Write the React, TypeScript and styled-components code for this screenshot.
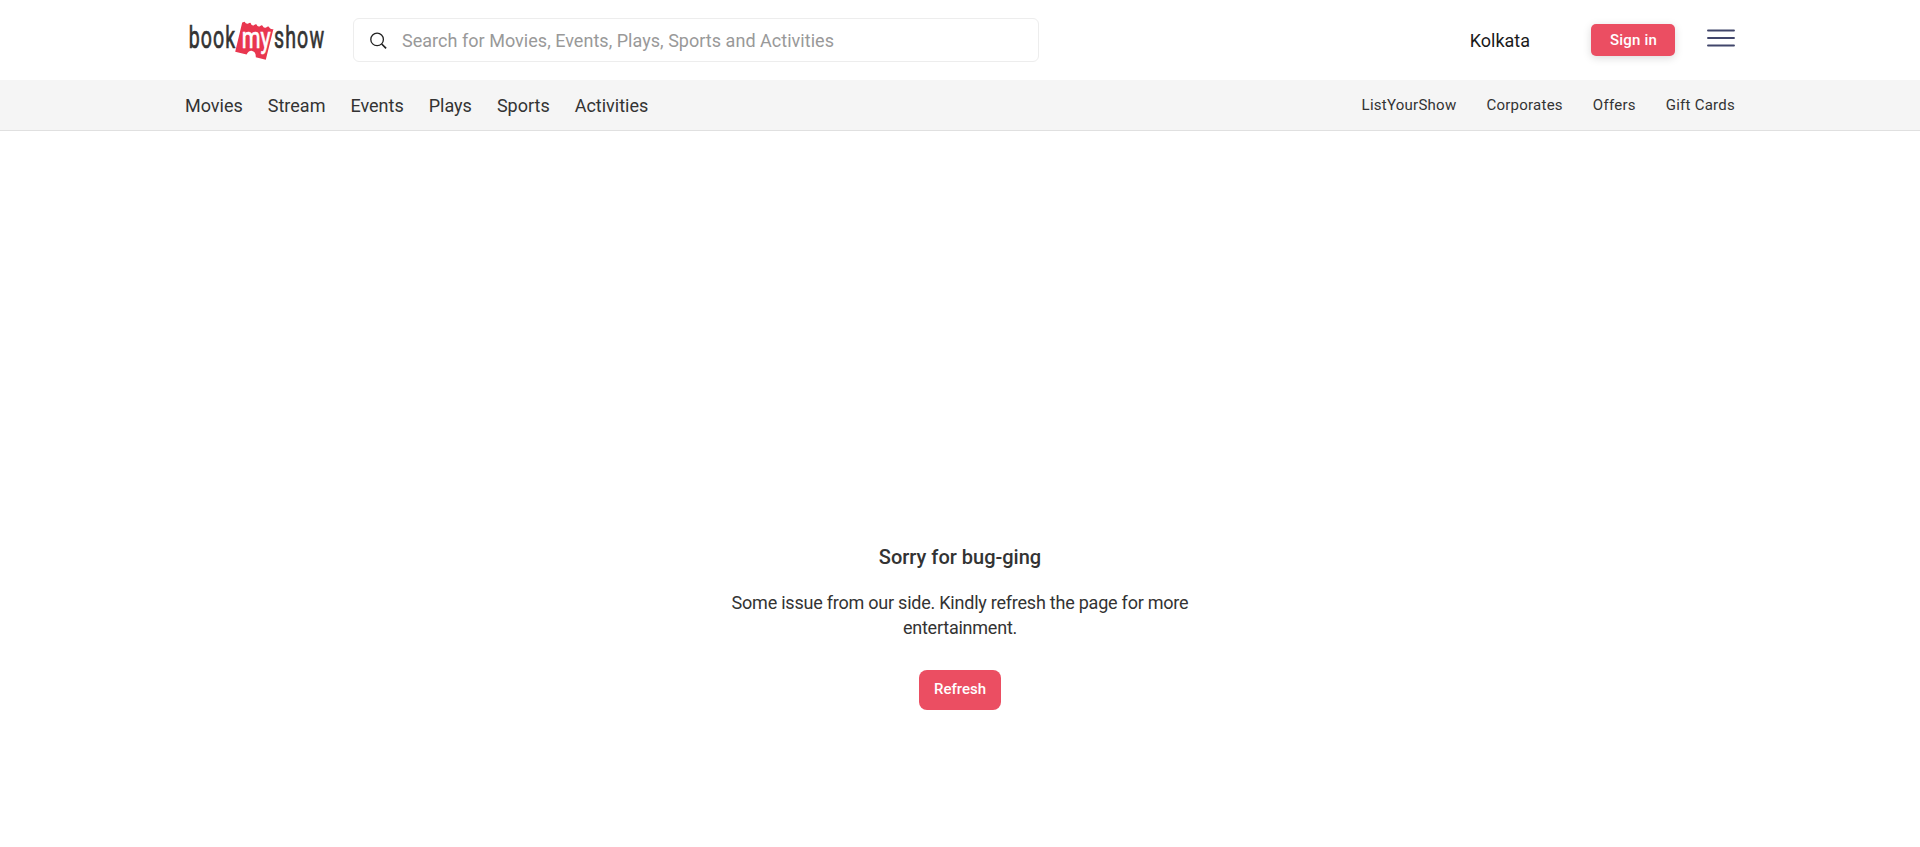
import React from "react";
import styled, { createGlobalStyle } from "styled-components";

const GlobalStyle = createGlobalStyle`
  * { box-sizing: border-box; }
  body { margin: 0; background: #fff; color: #333; font-family: Roboto, sans-serif; }
  button, input { font-family: inherit; }
`;

const Page = styled.div`
  height: 847px;
  display: flex;
  flex-direction: column;
  overflow: hidden;
`;
const Header = styled.header`
  height: 80px;
  padding: 0 185px 0 188px;
  display: flex;
  align-items: center;
`;
const LogoSvg = styled.svg`
  display: block;
  flex: none;
`;
const SearchBox = styled.label`
  width: 686px;
  height: 44px;
  margin: 0 0 0 25px;
  padding: 0 16px;
  display: flex;
  align-items: center;
  border: 1px solid #ededed;
  border-radius: 6px;
`;
const SearchIcon = styled.svg`
  display: block;
  margin-top: 2px;
`;
const SearchInput = styled.input`
  flex: 1;
  margin-left: 14px;
  padding: 1px 0 0;
  border: 0;
  outline: 0;
  font-size: 18px;
  letter-spacing: 0.03px;
  background: transparent;
  &::placeholder { color: #999; opacity: 1; }
`;
const Actions = styled.div`
  margin-left: auto;
  display: flex;
  align-items: center;
`;
const City = styled.span`
  font-size: 18px;
  line-height: 22px;
  color: #1a1a1a;
  margin: 1px 61px 0 0;
`;
const SignIn = styled.button`
  width: 84px;
  height: 32px;
  margin-right: 32px;
  padding: 0 0 0 1px;
  border: 0;
  border-radius: 5px;
  background: #eb4e62;
  color: #fff;
  font-size: 15px;
  font-weight: 500;
  letter-spacing: 0.2px;
  box-shadow: 0 2px 8px rgba(0, 0, 0, 0.15);
`;
const MenuIcon = styled.svg`
  display: block;
  margin-bottom: 4px;
`;
const NavBar = styled.nav`
  height: 51px;
  padding: 0 185px;
  display: flex;
  align-items: center;
  justify-content: space-between;
  background: #f5f5f5;
  border-bottom: 1px solid #e0e0e0;
`;
const NavGroup = styled.div<{ $small?: boolean }>`
  display: flex;
  gap: ${(p) => (p.$small ? "30px" : "25px")};
  font-size: ${(p) => (p.$small ? "15px" : "18px")};
  letter-spacing: ${(p) => (p.$small ? "0.25px" : "0")};
  line-height: 22px;
  padding: ${(p) => (p.$small ? "0 0 1px" : "2px 0 0")};
`;
const NavItem = styled.a`
  color: #333;
`;
const Main = styled.main`
  flex: 1;
  padding-top: 412px;
  display: flex;
  flex-direction: column;
  align-items: center;
  text-align: center;
`;
const Title = styled.h1`
  margin: 0;
  font-size: 20px;
  line-height: 28px;
  font-weight: 500;
`;
const Message = styled.p`
  width: 480px;
  margin: 19px 0 0;
  font-size: 18px;
  line-height: 25px;
  letter-spacing: -0.23px;
`;
const Refresh = styled.button`
  width: 82px;
  height: 40px;
  margin-top: 30px;
  padding: 0 0 3px;
  border: 0;
  border-radius: 8px;
  background: #eb4e62;
  color: #fff;
  font-size: 15px;
  font-weight: 500;
`;

const primaryLinks = ["Movies", "Stream", "Events", "Plays", "Sports", "Activities"];
const secondaryLinks = ["ListYourShow", "Corporates", "Offers", "Gift Cards"];

function Logo() {
  return (
    <LogoSvg width="140" height="50" viewBox="0 0 140 50" fontFamily="Roboto, sans-serif">
      <path
        fill="#e9364f"
        d="M56.6 6.7 Q58 9.5 60.3 8.6 Q61.8 7.4 62.6 7.9 Q63.3 11.1 66 10.2 Q67.6 8.6 68.6 9.4 Q69.4 12.3 72 11.3 Q73.6 9.8 74.6 10.7 Q75.6 13.5 78.2 12.4 Q79.8 10.8 81 11.7 Q81.6 14.4 85.4 14.1 L77.8 44.8 L67.8 42.3 Q68 36.4 63.6 35.7 Q60.4 35.5 58.6 39.6 L47.2 36.8 L54.2 7.5 Z"
      />
      <text transform="translate(0.7 32.9) scale(0.64 1)" fontSize="30.5" letterSpacing="1.8" fill="#333" stroke="#333" strokeWidth="0.7">book</text>
      <text transform="translate(53.8 32.6) scale(0.74 1)" fontSize="29" fill="#fff" stroke="#fff" strokeWidth="0.6">my</text>
      <text transform="translate(86 32.9) scale(0.64 1)" fontSize="30.5" letterSpacing="1.8" fill="#333" stroke="#333" strokeWidth="0.7">show</text>
    </LogoSvg>
  );
}

export default function App() {
  return (
    <Page>
      <GlobalStyle />
      <Header>
        <Logo />
        <SearchBox>
          <SearchIcon width="18" height="18" viewBox="0 0 18 18" fill="none" stroke="#222" strokeWidth="1.3">
            <circle cx="7.1" cy="7.4" r="6.3" />
            <path d="M11.7 12l4.4 4.4" strokeWidth="1.7" />
          </SearchIcon>
          <SearchInput placeholder="Search for Movies, Events, Plays, Sports and Activities" />
        </SearchBox>
        <Actions>
          <City>Kolkata</City>
          <SignIn>Sign in</SignIn>
          <MenuIcon width="28" height="18" viewBox="0 0 28 18" stroke="#41466b" strokeWidth="1.9" strokeLinecap="round">
            <path d="M1 1.5h26M1 9h26M1 16.5h26" />
          </MenuIcon>
        </Actions>
      </Header>
      <NavBar>
        <NavGroup>
          {primaryLinks.map((l) => <NavItem key={l}>{l}</NavItem>)}
        </NavGroup>
        <NavGroup $small>
          {secondaryLinks.map((l) => <NavItem key={l}>{l}</NavItem>)}
        </NavGroup>
      </NavBar>
      <Main>
        <Title>Sorry for bug-ging</Title>
        <Message>Some issue from our side. Kindly refresh the page for more entertainment.</Message>
        <Refresh>Refresh</Refresh>
      </Main>
    </Page>
  );
}
